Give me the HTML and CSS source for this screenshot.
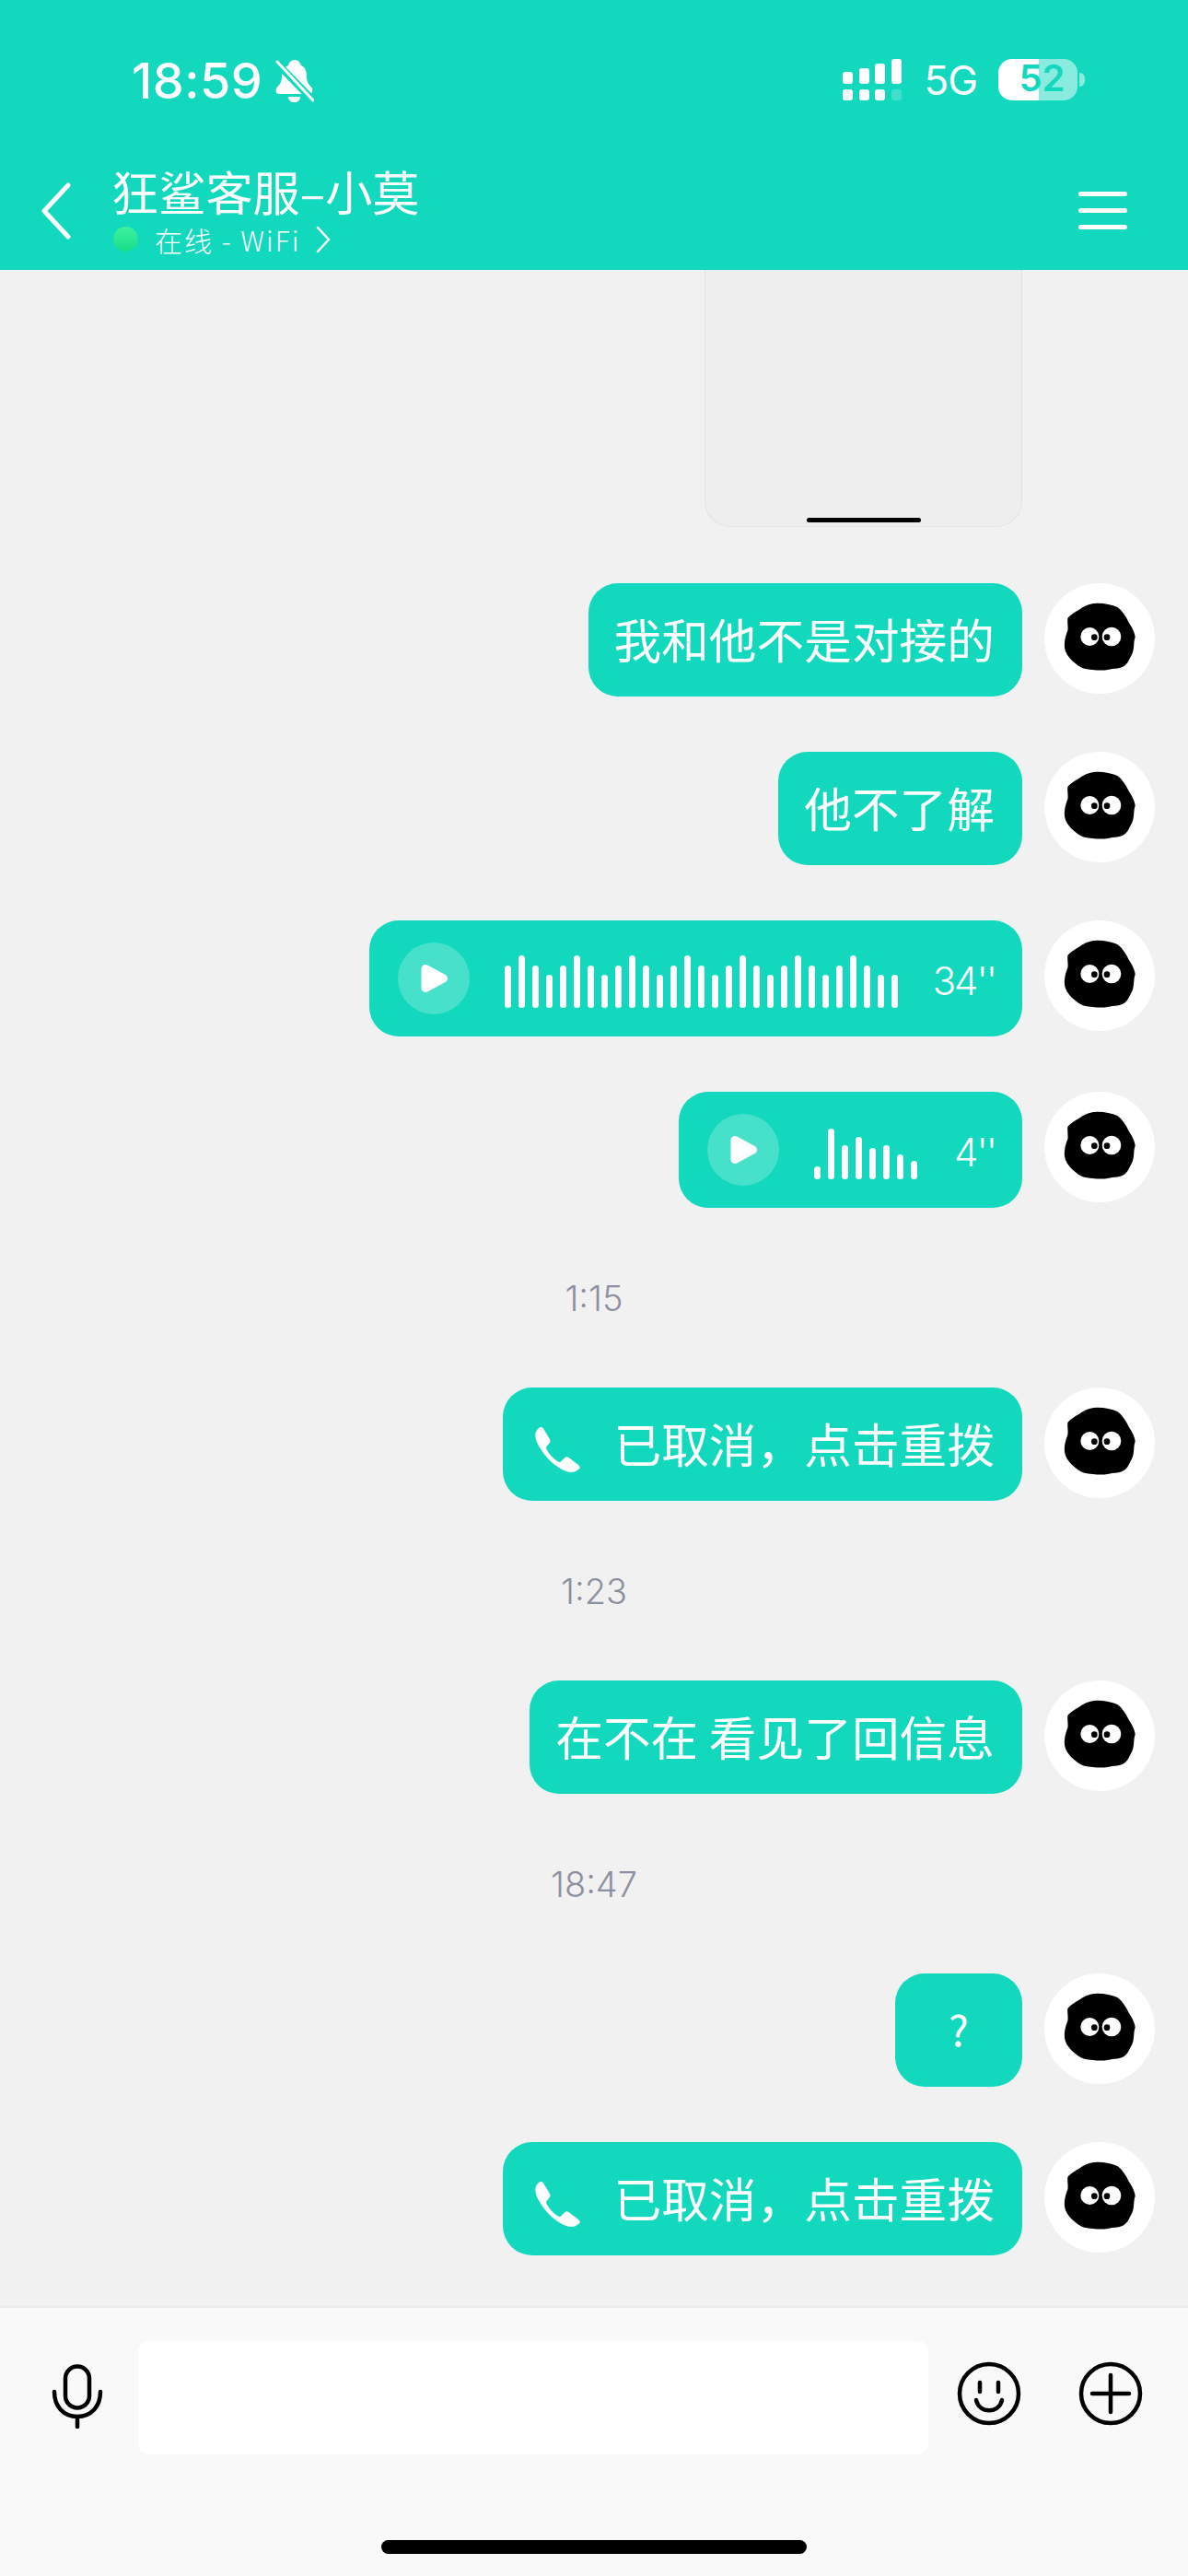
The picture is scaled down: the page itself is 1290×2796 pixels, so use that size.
FILE: index.html
```html
<!DOCTYPE html>
<html lang="zh-CN">
<head>
<meta charset="utf-8">
<title>狂鲨客服-小莫</title>
<link rel="stylesheet" href="styles.css">
</head>
<body>
<svg class="defs" width="0" height="0" aria-hidden="true">
  <symbol id="soot" viewBox="42 38 360 360">
    <path fill="#000" d="M215 103C240 103 262 108 280 116C296 128 308 146 318 168C326 180 336 196 338 214C332 226 336 250 328 268C320 282 316 296 306 304C292 318 268 314 248 320C226 324 196 320 172 316C156 312 146 302 132 290C120 278 110 264 108 248C106 232 110 214 116 198C122 186 116 168 118 152C128 138 148 130 164 118C180 108 198 103 215 103Z"/>
    <circle cx="190" cy="212" r="30" fill="#fff"/><circle cx="261" cy="212" r="31" fill="#fff"/>
    <circle cx="205" cy="214" r="10" fill="#000"/><circle cx="246" cy="214" r="10" fill="#000"/>
  </symbol>
  <symbol id="play" viewBox="0 0 78 78">
    <circle cx="39" cy="39" r="39" fill="#fff" fill-opacity=".22"/>
    <path d="M30 28.500L49.500 39L30 49.500Z" fill="#fff" stroke="#fff" stroke-width="9" stroke-linejoin="round"/>
  </symbol>
  <symbol id="phone" viewBox="0 0 50 49">
    <path fill="#fff" d="M5 1C7-.5 9 0 10 1.500L17 13C18 15 17.500 16.500 16 18L13.500 21C13 22 13 23.500 14 25C17 30 21 34.500 26 37.500C27.500 38.300 28.500 38 29.500 37L33 33.500C34.500 32 36 32 37.500 33L48 41C50 42.500 50 44 49 45.500L45 48C43 49 39 49.500 35 48C25 45 13 34 6 22C1 14-1 6 5 1Z"/>
  </symbol>
</svg>
<div class="page">
  <header class="top">
    <div class="status">
      <div class="status-left">
        <span class="clock">18:59</span>
        <svg class="bell" width="42" height="46" viewBox="0 0 42 46">
          <path fill="#fff" d="M21 0C25 0 27 3 28 6C33 8 34 13 34 19C34 25 38 28 40 31C41 34 40 37 37 37L4 37C1 37 0 34 1 31C3 28 7 25 7 19C7 13 9 8 14 6C15 3 17 0 21 0ZM14 40L27 40C27 44 24 46 20.500 46C17 46 14 44 14 40Z"/>
          <path d="M1 3L41 44" stroke="#12d8bd" stroke-width="8" fill="none"/>
          <path d="M2 2L41 44" stroke="#fff" stroke-width="3" stroke-linecap="round" fill="none"/>
        </svg>
      </div>
      <div class="status-right">
        <svg class="signal" width="64" height="45" viewBox="0 0 64 45">
          <rect x="0" y="14" width="11" height="13" rx="3" fill="#fff"/><rect x="18" y="10" width="11" height="17" rx="3" fill="#fff"/><rect x="35" y="5" width="11" height="22" rx="3" fill="#fff"/><rect x="53" y="0" width="11" height="27" rx="3" fill="#fff"/>
          <rect x="0" y="33" width="11" height="12" rx="3" fill="#fff"/><rect x="18" y="33" width="11" height="12" rx="3" fill="#fff"/><rect x="35" y="33" width="11" height="12" rx="3" fill="#fff"/><rect x="53" y="33" width="11" height="12" rx="3" fill="#fff" fill-opacity=".2"/>
        </svg>
        <span class="net">5G</span>
        <div class="battery"><span class="battery-num">52</span></div>
        <span class="battery-tip"></span>
      </div>
    </div>
    <nav class="nav">
      <svg class="back" width="32" height="62" viewBox="0 0 32 62"><path d="M29 3L3 31L29 59" fill="none" stroke="#fff" stroke-width="5" stroke-linecap="round" stroke-linejoin="round"/></svg>
      <div class="who">
        <div class="who-name">狂鲨客服–小莫</div>
        <div class="who-sub">
          <span class="dot"></span>
          <span class="who-state">在线 - WiFi</span>
          <svg class="sub-arrow" width="16" height="30" viewBox="0 0 16 30"><path d="M2 2L14 15L2 28" fill="none" stroke="#fff" stroke-width="2.500" stroke-linecap="round" stroke-linejoin="round"/></svg>
        </div>
      </div>
      <div class="menu"><span></span><span></span><span></span></div>
    </nav>
  </header>

  <main class="chat">
    <div class="row row-shot">
      <div class="shot"><span class="shot-bar"></span></div>
    </div>
    <div class="row"><div class="bubble">我和他不是对接的</div><svg class="avatar"><use href="#soot"/></svg></div>
    <div class="row"><div class="bubble">他不了解</div><svg class="avatar"><use href="#soot"/></svg></div>
    <div class="row">
      <div class="bubble voice">
        <svg class="play"><use href="#play"/></svg>
        <div class="wave">
          <i class="m"></i><i class="t"></i><i class="m"></i><i class="s"></i><i class="m"></i><i class="t"></i><i class="m"></i><i class="s"></i><i class="m"></i><i class="t"></i><i class="m"></i><i class="s"></i><i class="m"></i><i class="t"></i><i class="m"></i><i class="s"></i><i class="m"></i><i class="t"></i><i class="m"></i><i class="s"></i><i class="m"></i><i class="t"></i><i class="m"></i><i class="s"></i><i class="m"></i><i class="t"></i><i class="m"></i><i class="s"></i><i class="s"></i>
        </div>
        <span class="secs">34''</span>
      </div>
      <svg class="avatar"><use href="#soot"/></svg>
    </div>
    <div class="row">
      <div class="bubble voice">
        <svg class="play"><use href="#play"/></svg>
        <div class="wave">
          <i style="height:14px"></i><i style="height:55px"></i><i style="height:37px"></i><i style="height:46px"></i><i style="height:34px"></i><i style="height:37px"></i><i style="height:27px"></i><i style="height:20px"></i>
        </div>
        <span class="secs secs-short">4''</span>
      </div>
      <svg class="avatar"><use href="#soot"/></svg>
    </div>
    <div class="time">1:15</div>
    <div class="row">
      <div class="bubble call"><svg class="phone"><use href="#phone"/></svg><span>已取消，点击重拨</span></div>
      <svg class="avatar"><use href="#soot"/></svg>
    </div>
    <div class="time">1:23</div>
    <div class="row"><div class="bubble">在不在 看见了回信息</div><svg class="avatar"><use href="#soot"/></svg></div>
    <div class="time">18:47</div>
    <div class="row"><div class="bubble bubble-q">?</div><svg class="avatar"><use href="#soot"/></svg></div>
    <div class="row">
      <div class="bubble call"><svg class="phone"><use href="#phone"/></svg><span>已取消，点击重拨</span></div>
      <svg class="avatar"><use href="#soot"/></svg>
    </div>
  </main>

  <footer class="composer">
    <div class="composer-row">
      <svg class="mic" width="60" height="70" viewBox="0 0 60 70">
        <rect x="17" y="2.500" width="26" height="45" rx="13" fill="none" stroke="#000" stroke-width="4.500"/>
        <path d="M5 30C5 46 15 57 30 57C45 57 55 46 55 30" fill="none" stroke="#000" stroke-width="4.500" stroke-linecap="round"/>
        <path d="M30 57L30 68" fill="none" stroke="#000" stroke-width="4.500" stroke-linecap="round"/>
      </svg>
      <div class="field"></div>
      <svg class="smile" width="70" height="70" viewBox="0 0 70 70">
        <circle cx="35" cy="35" r="32" fill="none" stroke="#000" stroke-width="4.500"/>
        <path d="M25 23L25 33M45 23L45 33" fill="none" stroke="#000" stroke-width="4.500" stroke-linecap="round"/>
        <path d="M21 42C24 57 46 57 49 42" fill="none" stroke="#000" stroke-width="4.500" stroke-linecap="round"/>
      </svg>
      <svg class="plus" width="70" height="70" viewBox="0 0 70 70">
        <circle cx="35" cy="35" r="32" fill="none" stroke="#000" stroke-width="4.500"/>
        <path d="M15 35L55 35M35 15L35 55" fill="none" stroke="#000" stroke-width="4.500" stroke-linecap="round"/>
      </svg>
    </div>
    <div class="home"></div>
  </footer>
</div>
</body>
</html>
```

FILE: styles.css
```css
* { box-sizing: border-box; }
html, body { margin: 0; padding: 0; }
body { width: 1290px; height: 2796px; overflow: hidden; font-family: "Noto Sans CJK SC", "Noto Sans", sans-serif; background: #f1f1f1; }
.defs { position: absolute; }
.page { width: 1290px; height: 2796px; display: flex; flex-direction: column; }

.top { height: 293px; flex: none; background: #12d8bd; color: #fff; display: flex; flex-direction: column; position: relative; z-index: 1; }
.status { height: 172px; flex: none; display: flex; justify-content: space-between; padding: 0 112px 0 143px; }
.status-left { display: flex; align-items: flex-start; gap: 14px; padding-top: 65px; }
.clock { font-family: "Inter", sans-serif; font-weight: 500; font-size: 54px; line-height: 45px; letter-spacing: .4px; }
.bell { display: block; }
.status-right { display: flex; align-items: flex-start; padding-top: 64px; }
.signal { display: block; }
.net { font-family: "Inter", sans-serif; font-size: 44px; line-height: 46px; margin: 0 23px 0 24px; font-weight: 400; letter-spacing: -1px; }
.battery { width: 86px; height: 45px; border-radius: 15px; background: linear-gradient(90deg, #fff 0, #fff 51%, rgba(255,255,255,.5) 51%); display: flex; align-items: center; justify-content: center; padding-left: 9px; }
.battery-num { font-family: "Inter", sans-serif; font-weight: 600; font-size: 40px; line-height: 45px; color: #12d8bd; padding-bottom: 4px; }
.battery-tip { width: 6px; height: 15px; margin: 15px 0 0 2px; border-radius: 0 6px 6px 0; background: rgba(255,255,255,.5); }

.nav { flex: 1; display: flex; align-items: center; padding: 0 66px 10px 45px; }
.back { flex: none; display: block; margin: 2px 44px 0 0; }
.who { flex: 1; display: flex; flex-direction: column; }
.who-name { font-size: 51.200px; line-height: 60px; font-weight: 400; }
.who-sub { display: flex; align-items: center; height: 38px; margin-top: 4px; font-size: 30px; font-weight: 300; }
.dot { width: 27px; height: 27px; margin: 0 18px 0 2px; border-radius: 50%; background: linear-gradient(#3df29c, #17dc8c); }
.who-state { white-space: pre; letter-spacing: 2px; }
.sub-arrow { display: block; margin-left: 17px; }
.menu { width: 53px; margin-top: 2px; display: flex; flex-direction: column; gap: 13px; }
.menu span { display: block; height: 5px; border-radius: 3px; background: #fff; }

.chat { flex: 1; min-height: 0; overflow: hidden; padding: 0 36px 0 0; display: flex; flex-direction: column; align-items: stretch; }
.row { flex: none; display: flex; justify-content: flex-end; align-items: flex-start; gap: 24px; margin-bottom: 60px; }
.row-shot { padding-right: 144px; margin-bottom: 61px; }
.shot { width: 345px; height: 279px; display: flex; align-items: flex-end; justify-content: center; padding-bottom: 4px; background: #eeeeee; border: 1px solid #e3e3e3; border-top: 0; border-radius: 0 0 28px 28px; }
.shot-bar { display: block; width: 124px; height: 5px; border-radius: 3px; background: #000; }
.avatar { width: 120px; height: 120px; flex: none; display: block; background: #fff; border-radius: 50%; }
.bubble { height: 123px; display: flex; align-items: center; padding: 0 30px 4px 28px; border-radius: 32px; background: #12d8bd; color: #fff; font-size: 51.700px; font-weight: 400; line-height: 60px; white-space: pre; }
.bubble-q { width: 138px; justify-content: center; padding: 0 0 6px; font-size: 46px; }
.call { padding-left: 34px; }
.phone { width: 50px; height: 49px; flex: none; display: block; margin: 16px 37px 0 0; }
.voice { height: 126px; padding: 0 29px 0 31px; }
.play { width: 78px; height: 78px; flex: none; display: block; }
.wave { display: flex; align-items: flex-end; gap: 8px; height: 57px; margin: 7px 0 0 38px; }
.wave i { display: block; width: 7px; border-radius: 4px; background: #fff; }
.wave .t { height: 57px; }
.wave .m { height: 46px; }
.wave .s { height: 36px; }
.secs { margin: 6px 0 0 38px; font-family: "Inter", sans-serif; font-weight: 300; font-size: 42px; line-height: 60px; letter-spacing: -2px; }
.secs-short { margin-left: 40px; }
.time { flex: none; height: 75px; margin-bottom: 60px; margin-right: -36px; display: flex; align-items: center; justify-content: center; font-family: "Inter", sans-serif; font-weight: 300; font-size: 38px; color: #8c90a0; }

.composer { height: 293px; flex: none; background: #f9f9f9; border-top: 2px solid #ebebeb; padding-top: 36px; }
.composer-row { display: flex; align-items: flex-start; padding-left: 54px; height: 123px; }
.mic { display: block; flex: none; margin-top: 25px; }
.field { width: 858px; height: 123px; flex: none; margin-left: 36px; background: #fff; border-radius: 12px; }
.smile { display: block; flex: none; margin: 22px 0 0 31px; }
.plus { display: block; flex: none; margin: 22px 0 0 62px; }
.home { width: 462px; height: 15px; margin: 93px auto 0; border-radius: 8px; background: #000; }
```
